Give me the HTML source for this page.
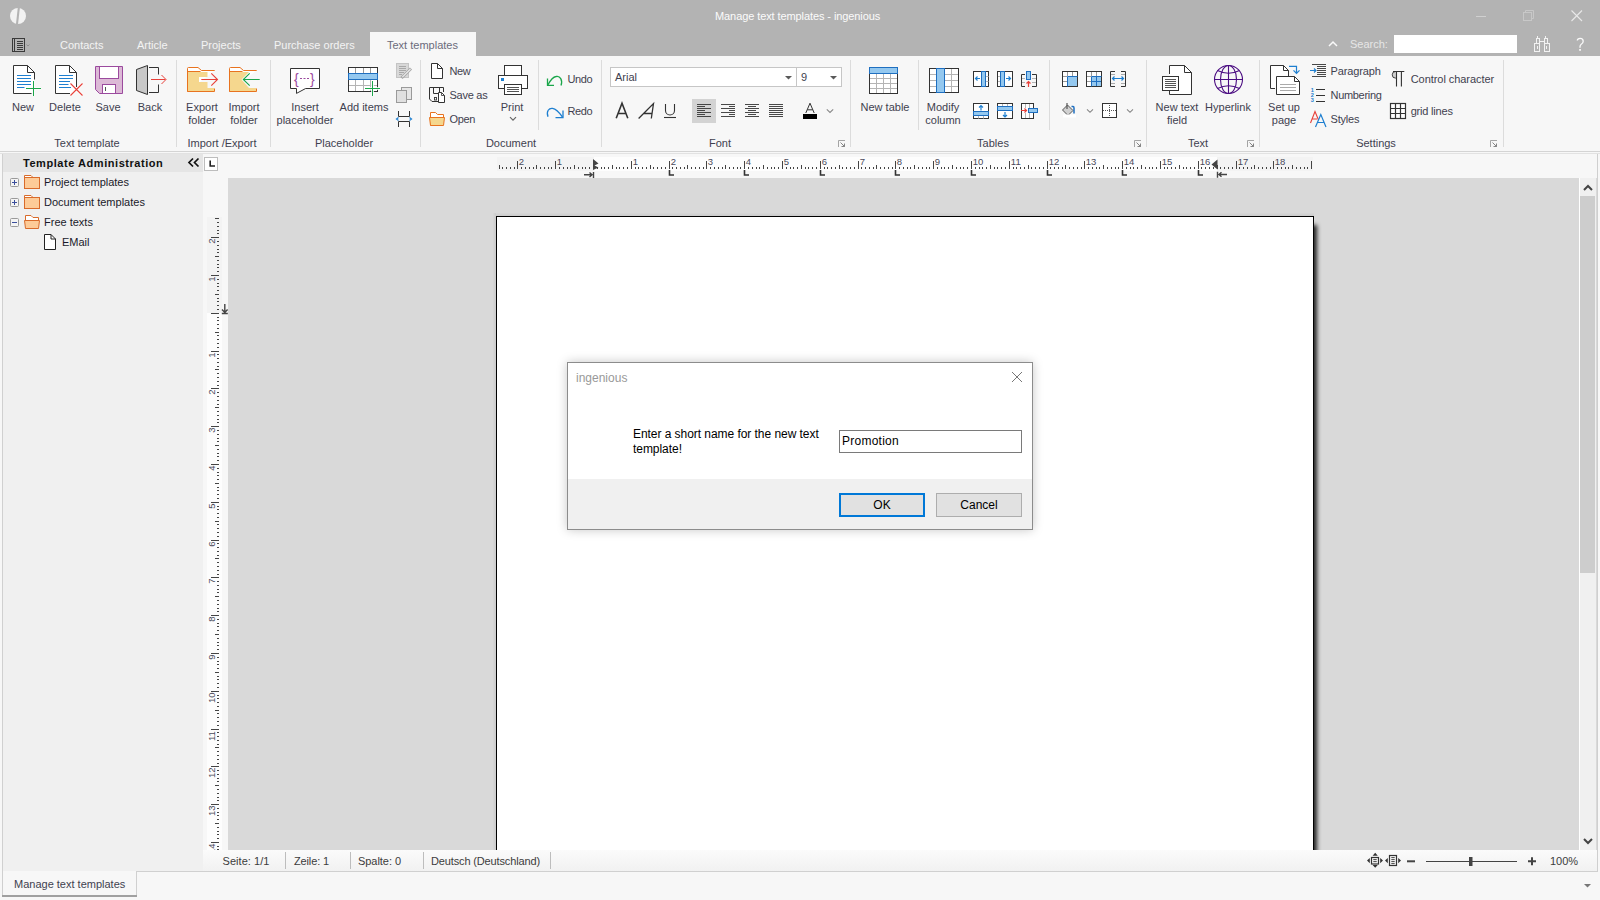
<!DOCTYPE html><html><head><meta charset="utf-8"><style>
html,body{margin:0;padding:0;}
body{width:1600px;height:900px;position:relative;overflow:hidden;background:#f7f7f7;font-family:"Liberation Sans",sans-serif;}
.t{position:absolute;white-space:nowrap;}
.r{position:absolute;}
.s{position:absolute;overflow:visible;}
</style></head><body>
<div class="r" style="left:0px;top:0px;width:1600px;height:56px;background:#b3b3b3;"></div>
<div class="t" style="left:715px;top:10.69px;font-size:11px;line-height:11px;color:#fbfbfb;letter-spacing:-0.09px;">Manage text templates - ingenious</div>
<svg class="s" style="left:10px;top:8px;" width="16" height="16" viewBox="0 0 16 16"><circle cx="8" cy="8" r="8" fill="#f2f2f2"/><path d="M8.9 -1 L6.9 17" stroke="#b3b3b3" stroke-width="2.1"/></svg>
<div class="r" style="left:1476px;top:16px;width:10px;height:1px;background:#d0d0d0;"></div>
<svg class="s" style="left:1523px;top:10px;" width="12" height="12" viewBox="0 0 12 12"><rect x="0.5" y="2.5" width="8" height="8" fill="none" stroke="#c8c8c8"/><path d="M2.5 2.5 V0.5 H10.5 V8.5 H8.5" fill="none" stroke="#c8c8c8"/></svg>
<svg class="s" style="left:1571px;top:10px;" width="12" height="12" viewBox="0 0 12 12"><path d="M0.5 0.5 L11 11 M11 0.5 L0.5 11" stroke="#e8e8e8" stroke-width="1.1"/></svg>
<div class="t" style="left:60px;top:39.69px;font-size:11px;line-height:11px;color:#f4f4f4;">Contacts</div>
<div class="t" style="left:137px;top:39.69px;font-size:11px;line-height:11px;color:#f4f4f4;">Article</div>
<div class="t" style="left:201px;top:39.69px;font-size:11px;line-height:11px;color:#f4f4f4;">Projects</div>
<div class="t" style="left:274px;top:39.69px;font-size:11px;line-height:11px;color:#f4f4f4;">Purchase orders</div>
<div class="r" style="left:370px;top:32px;width:106px;height:24px;background:#f7f7f7;"></div>
<div class="t" style="left:387px;top:39.69px;font-size:11px;line-height:11px;color:#6b6b7b;">Text templates</div>
<svg class="s" style="left:12px;top:38px;" width="20" height="14" viewBox="0 0 20 14"><rect x="0.5" y="0.5" width="12" height="13" fill="none" stroke="#3a3a3a"/><path d="M2.5 1 V13" stroke="#3a3a3a"/><path d="M5 3.5 H11 M5 5.5 H11 M5 7.5 H11 M5 9.5 H11 M5 11.5 H11" stroke="#3a3a3a"/><path d="M14.5 6.5 L16 8 L17.5 6.5" fill="none" stroke="#888" stroke-width="0.8"/></svg>
<svg class="s" style="left:1328px;top:41px;" width="10" height="6" viewBox="0 0 10 6"><path d="M1 5 L5 1 L9 5" fill="none" stroke="#fafafa" stroke-width="1.5"/></svg>
<div class="t" style="left:1350px;top:38.69px;font-size:11px;line-height:11px;color:#e6e6e6;">Search:</div>
<div class="r" style="left:1394px;top:35px;width:123px;height:18px;background:#ffffff;"></div>
<svg class="s" style="left:1530px;top:32px;" width="24" height="24" viewBox="0 0 24 24"><g fill="none" stroke="#f2f2f2" stroke-width="1"><rect x="4.5" y="11.5" width="5" height="8"/><rect x="14.5" y="11.5" width="5" height="8"/><rect x="6.5" y="6.5" width="3" height="5"/><rect x="14.5" y="6.5" width="3" height="5"/><path d="M9.5 9.5 H14.5"/><path d="M7.5 14 V17 M16.5 14 V17"/><path d="M7.5 4 V6.5 M15.5 4 V6.5"/></g></svg>
<svg class="s" style="left:1574px;top:36px;" width="12" height="16" viewBox="0 0 12 16"><path d="M3.3 4.5 Q3.5 2.3 6.2 2.3 Q9.2 2.3 9.2 5.2 Q9.2 7.2 7 8.5 Q6 9.2 6 11 V11.8" fill="none" stroke="#fafafa" stroke-width="1.3"/><rect x="5.2" y="13" width="1.7" height="1.8" fill="#fafafa"/></svg>
<div class="r" style="left:0px;top:151px;width:1600px;height:1px;background:#d4d4d4;"></div>
<div class="r" style="left:0px;top:153px;width:1600px;height:1px;background:#e2e2e2;"></div>
<div class="r" style="left:176px;top:60px;width:1px;height:87px;background:#dcdcdc;"></div>
<div class="r" style="left:270px;top:60px;width:1px;height:87px;background:#dcdcdc;"></div>
<div class="r" style="left:420px;top:60px;width:1px;height:87px;background:#dcdcdc;"></div>
<div class="r" style="left:601px;top:60px;width:1px;height:87px;background:#dcdcdc;"></div>
<div class="r" style="left:850px;top:60px;width:1px;height:87px;background:#dcdcdc;"></div>
<div class="r" style="left:1146px;top:60px;width:1px;height:87px;background:#dcdcdc;"></div>
<div class="r" style="left:1259px;top:60px;width:1px;height:87px;background:#dcdcdc;"></div>
<div class="r" style="left:1503px;top:60px;width:1px;height:87px;background:#dcdcdc;"></div>
<div class="r" style="left:538px;top:60px;width:1px;height:70px;background:#dcdcdc;"></div>
<div class="r" style="left:918px;top:60px;width:1px;height:70px;background:#dcdcdc;"></div>
<div class="r" style="left:1049px;top:60px;width:1px;height:70px;background:#dcdcdc;"></div>
<div class="t" style="left:23px;top:101.69px;font-size:11px;line-height:11px;color:#3f3f4f;transform:translateX(-50%);">New</div>
<div class="t" style="left:65px;top:101.69px;font-size:11px;line-height:11px;color:#3f3f4f;transform:translateX(-50%);">Delete</div>
<div class="t" style="left:108px;top:101.69px;font-size:11px;line-height:11px;color:#3f3f4f;transform:translateX(-50%);">Save</div>
<div class="t" style="left:150px;top:101.69px;font-size:11px;line-height:11px;color:#3f3f4f;transform:translateX(-50%);">Back</div>
<div class="t" style="left:202px;top:101.69px;font-size:11px;line-height:11px;color:#3f3f4f;transform:translateX(-50%);">Export</div>
<div class="t" style="left:202px;top:114.69px;font-size:11px;line-height:11px;color:#3f3f4f;transform:translateX(-50%);">folder</div>
<div class="t" style="left:244px;top:101.69px;font-size:11px;line-height:11px;color:#3f3f4f;transform:translateX(-50%);">Import</div>
<div class="t" style="left:244px;top:114.69px;font-size:11px;line-height:11px;color:#3f3f4f;transform:translateX(-50%);">folder</div>
<div class="t" style="left:305px;top:101.69px;font-size:11px;line-height:11px;color:#3f3f4f;transform:translateX(-50%);">Insert</div>
<div class="t" style="left:305px;top:114.69px;font-size:11px;line-height:11px;color:#3f3f4f;transform:translateX(-50%);">placeholder</div>
<div class="t" style="left:364px;top:101.69px;font-size:11px;line-height:11px;color:#3f3f4f;transform:translateX(-50%);">Add items</div>
<div class="t" style="left:512px;top:101.69px;font-size:11px;line-height:11px;color:#3f3f4f;transform:translateX(-50%);">Print</div>
<div class="t" style="left:885px;top:101.69px;font-size:11px;line-height:11px;color:#3f3f4f;transform:translateX(-50%);">New table</div>
<div class="t" style="left:943px;top:101.69px;font-size:11px;line-height:11px;color:#3f3f4f;transform:translateX(-50%);">Modify</div>
<div class="t" style="left:943px;top:114.69px;font-size:11px;line-height:11px;color:#3f3f4f;transform:translateX(-50%);">column</div>
<div class="t" style="left:1177px;top:101.69px;font-size:11px;line-height:11px;color:#3f3f4f;transform:translateX(-50%);">New text</div>
<div class="t" style="left:1177px;top:114.69px;font-size:11px;line-height:11px;color:#3f3f4f;transform:translateX(-50%);">field</div>
<div class="t" style="left:1228px;top:101.69px;font-size:11px;line-height:11px;color:#3f3f4f;transform:translateX(-50%);">Hyperlink</div>
<div class="t" style="left:1284px;top:101.69px;font-size:11px;line-height:11px;color:#3f3f4f;transform:translateX(-50%);">Set up</div>
<div class="t" style="left:1284px;top:114.69px;font-size:11px;line-height:11px;color:#3f3f4f;transform:translateX(-50%);">page</div>
<div class="t" style="left:87px;top:137.69px;font-size:11px;line-height:11px;color:#3f3f4f;transform:translateX(-50%);">Text template</div>
<div class="t" style="left:222px;top:137.69px;font-size:11px;line-height:11px;color:#3f3f4f;transform:translateX(-50%);">Import /Export</div>
<div class="t" style="left:344px;top:137.69px;font-size:11px;line-height:11px;color:#3f3f4f;transform:translateX(-50%);">Placeholder</div>
<div class="t" style="left:511px;top:137.69px;font-size:11px;line-height:11px;color:#3f3f4f;transform:translateX(-50%);">Document</div>
<div class="t" style="left:720px;top:137.69px;font-size:11px;line-height:11px;color:#3f3f4f;transform:translateX(-50%);">Font</div>
<div class="t" style="left:993px;top:137.69px;font-size:11px;line-height:11px;color:#3f3f4f;transform:translateX(-50%);">Tables</div>
<div class="t" style="left:1198px;top:137.69px;font-size:11px;line-height:11px;color:#3f3f4f;transform:translateX(-50%);">Text</div>
<div class="t" style="left:1376px;top:137.69px;font-size:11px;line-height:11px;color:#3f3f4f;transform:translateX(-50%);">Settings</div>
<div class="t" style="left:449.5px;top:65.69px;font-size:11px;line-height:11px;color:#3f3f4f;letter-spacing:-0.467px;">New</div>
<div class="t" style="left:449.5px;top:89.69px;font-size:11px;line-height:11px;color:#3f3f4f;letter-spacing:-0.254px;">Save as</div>
<div class="t" style="left:449.5px;top:113.69px;font-size:11px;line-height:11px;color:#3f3f4f;letter-spacing:-0.334px;">Open</div>
<div class="t" style="left:567.5px;top:73.69px;font-size:11px;line-height:11px;color:#3f3f4f;letter-spacing:-0.378px;">Undo</div>
<div class="t" style="left:567.5px;top:105.69px;font-size:11px;line-height:11px;color:#3f3f4f;letter-spacing:-0.378px;">Redo</div>
<div class="t" style="left:1330.5px;top:65.69px;font-size:11px;line-height:11px;color:#3f3f4f;letter-spacing:-0.134px;">Paragraph</div>
<div class="t" style="left:1330.5px;top:89.69px;font-size:11px;line-height:11px;color:#3f3f4f;letter-spacing:-0.312px;">Numbering</div>
<div class="t" style="left:1330.5px;top:113.69px;font-size:11px;line-height:11px;color:#3f3f4f;letter-spacing:-0.195px;">Styles</div>
<div class="t" style="left:1410.7px;top:73.69px;font-size:11px;line-height:11px;color:#3f3f4f;letter-spacing:-0.053px;">Control character</div>
<div class="t" style="left:1410.7px;top:105.69px;font-size:11px;line-height:11px;color:#3f3f4f;letter-spacing:-0.203px;">grid lines</div>
<div class="r" style="left:610px;top:67px;width:187px;height:20px;background:#ffffff;box-sizing:border-box;border:1px solid #c6c6c6;"></div>
<div class="r" style="left:796px;top:67px;width:46px;height:20px;background:#ffffff;box-sizing:border-box;border:1px solid #c6c6c6;"></div>
<div class="t" style="left:615px;top:71.69px;font-size:11px;line-height:11px;color:#3f3f4f;">Arial</div>
<div class="t" style="left:801px;top:71.69px;font-size:11px;line-height:11px;color:#3f3f4f;">9</div>
<svg class="s" style="left:785px;top:76px;" width="8" height="4" viewBox="0 0 8 4"><path d="M0 0 H7 L3.5 3.5Z" fill="#5a5a5a"/></svg>
<svg class="s" style="left:830px;top:76px;" width="8" height="4" viewBox="0 0 8 4"><path d="M0 0 H7 L3.5 3.5Z" fill="#5a5a5a"/></svg>
<div class="r" style="left:692px;top:99px;width:24px;height:24px;background:#d3d3d3;"></div>
<svg class="s" style="left:0;top:0" width="1600" height="152" viewBox="0 0 1600 152"><path d="M31.5 93.5 H13.5 V65.5 H27.5 L34.5 72.5 V79.5" fill="#fff" stroke="#333333"/><path d="M27.5 65.5 V72.5 H34.5" fill="none" stroke="#333333"/><path d="M17 75.5 H31 M17 78.5 H31 M17 81.5 H31 M17 84.5 H31 M17 87.5 H24.5" stroke="#1e7fd0"/><path d="M33.5 81 V96 M26 88.5 H41" stroke="#fff" stroke-width="3" opacity="0.7"/><path d="M33.5 81 V96 M26 88.5 H41" stroke="#1aa64a"/><path d="M70 93.5 H55.5 V65.5 H69.5 L76.5 72.5 V87" fill="#fff" stroke="#333333"/><path d="M69.5 65.5 V72.5 H76.5" fill="none" stroke="#333333"/><path d="M59 75.5 H73 M59 78.5 H73 M59 81.5 H70 M59 84.5 H68.5 M59 87.5 H71" stroke="#1e7fd0"/><path d="M70.5 83.5 L82.5 95.5 M82.5 83.5 L70.5 95.5" stroke="#fff" stroke-width="3" opacity="0.7"/><path d="M70.5 83.5 L82.5 95.5 M82.5 83.5 L70.5 95.5" stroke="#e8413a" stroke-width="1.1"/><path d="M95.5 66.5 H122.5 V93.5 H99.5 L95.5 89.5 Z" fill="#dcb9d6" stroke="#9b4a9e"/><rect x="99.5" y="66.5" width="19" height="12" fill="#fff" stroke="#9b4a9e"/><rect x="102.5" y="84.5" width="13" height="9" fill="#fff" stroke="#9b4a9e"/><path d="M105.5 87 V91" stroke="#555"/><path d="M136.5 69.5 L147.5 65.5 V94.5 L136.5 90.5 Z" fill="#c8c8c8" stroke="#333333" stroke-linejoin="round"/><path d="M149 67.5 H158.5 V74.5 M158.5 84.5 V92.5 H149" fill="none" stroke="#333333"/><path d="M151 79.5 H165.5 M161.5 75 L166 79.5 L161.5 84" fill="none" stroke="#e8413a"/><path d="M187.5 91.5 V68.5 Q187.5 67.5 188.5 67.5 H198.0 L201.5 70.5 H214.7" fill="#fff" stroke="#e8731f"/><path d="M187.5 71.5 H200.5" stroke="#e8731f"/><path d="M188 72 H207.5 V88 H214 V91 H188 Z M199 77 H207.5 V82 H199 Z" fill="#f5d78e" fill-rule="evenodd"/><path d="M187.5 71.5 V91.5 H214.5 V88.5" fill="none" stroke="#e8731f"/><path d="M201.3 79.5 H217.5 M211.3 73.3 L217.5 79.5 L211.3 85.7" fill="none" stroke="#e8413a" stroke-width="1.1"/><path d="M229.5 91.5 V68.5 Q229.5 67.5 230.5 67.5 H240.0 L243.5 70.5 H256.7" fill="#fff" stroke="#e8731f"/><path d="M229.5 71.5 H242.5" stroke="#e8731f"/><path d="M230 72 H249 L241.5 79.5 L249 88 H256 V91 H230 Z" fill="#f5d78e"/><path d="M229.5 71.5 V91.5 H256.5 V88.5" fill="none" stroke="#e8731f"/><path d="M243.3 79.5 H259.7 M249.7 73.3 L243.3 79.5 L249.7 85.7" fill="none" stroke="#1aa64a" stroke-width="1.1"/><path d="M290.5 68.5 H319.5 V88.5 H305.6 L296.5 93.4 V88.5 H290.5 Z" fill="#fff" stroke="#333333"/><text x="294" y="84" font-family="Liberation Sans" font-size="14" fill="#9b4a9e">{</text><text x="310" y="84" font-family="Liberation Sans" font-size="14" fill="#9b4a9e">}</text><path d="M300 78.5 H310" stroke="#9b4a9e" stroke-dasharray="2 1.5"/><rect x="348.5" y="67.5" width="29" height="24" fill="#fff" stroke="#333333"/><path d="M355.5 68 V73 M363.5 68 V73 M370.5 68 V73" stroke="#999"/><path d="M355.5 80 V91 M363.5 80 V91 M370.5 80 V91 M349 85.5 H377" stroke="#b4b4b4"/><rect x="348.5" y="73.5" width="29" height="6" fill="#94c8ef" stroke="#1f6fc0"/><path d="M372.5 81 V96 M365 88.5 H380" stroke="#fff" stroke-width="3" opacity="0.8"/><path d="M372.5 81 V96 M365 88.5 H380" stroke="#1aa64a"/><rect x="396.5" y="63.5" width="12" height="14" fill="#d8d8d8" stroke="#c4c4c4"/><path d="M399 66.5 H406 M399 68.5 H406 M399 70.5 H406 M399 72.5 H404 M399 74.5 H402" stroke="#a8a8a8"/><path d="M401.5 78 L411 68.5" stroke="#a6a6a6" stroke-width="3"/><path d="M402.3 77.2 L410.5 69" stroke="#eeeeee" stroke-width="1.1"/><rect x="401.5" y="87.5" width="10" height="12" fill="#e6e6e6" stroke="#9a9a9a"/><rect x="396.5" y="90.5" width="10" height="12" fill="#e0e0e0" stroke="#9a9a9a"/><path d="M398.5 111 V116.5 H409.5 V111 M398.5 127 V121.5 H409.5 V127" fill="none" stroke="#333333"/><path d="M398.5 117.5 L396.5 119 L398.5 120.5 M409.5 117.5 L411.5 119 L409.5 120.5" fill="none" stroke="#1e7fd0" stroke-width="1.2"/><path d="M431.5 78.5 V63.5 H437.5 L442.5 68.5 V78.5 Z" fill="#fff" stroke="#333333"/><path d="M437.5 63.5 V68.5 H442.5" fill="none" stroke="#333333"/><path d="M438 101.5 H432 L429.5 99 V87.5 H443.5 V92" fill="none" stroke="#333333"/><path d="M433.5 88 V93.5 H438 M439.5 88 V92" fill="none" stroke="#333333"/><rect x="434.5" y="97.5" width="2" height="2.5" fill="none" stroke="#333333" stroke-width="0.9"/><path d="M438.5 102.5 V92.5 H441.5 L444.5 95.5 V102.5 Z" fill="#fff" stroke="#333333"/><path d="M441.5 92.5 V95.5 H444.5" fill="none" stroke="#333333" stroke-width="0.8"/><path d="M430.5 125.5 V112.5 H435.5 L437.5 114.5 H443.5 V117" fill="#fff" stroke="#e8731f"/><path d="M429.5 117.5 H444.5 L443.5 125.5 H430.5 Z" fill="#f5d78e" stroke="#e8731f"/><rect x="504.5" y="65.5" width="17" height="10" fill="#fff" stroke="#333333"/><rect x="498.5" y="75.5" width="29" height="13" fill="#fff" stroke="#333333"/><rect x="504.5" y="84.5" width="17" height="10" fill="#fff" stroke="#333333"/><path d="M507 87.5 H519 M507 89.5 H519 M507 91.5 H519" stroke="#555"/><rect x="501" y="78" width="3" height="3" fill="#1e7fd0"/><path d="M510 117.2 L513 120.2 L516 117.2" fill="none" stroke="#666" stroke-width="1.2"/><path d="M561 85.5 C563 80 560 75.5 556 76.5 C553 77 550 81 547.8 85" fill="none" stroke="#1aa64a" stroke-width="1.3"/><path d="M547.5 78.5 V85.3 H554" fill="none" stroke="#1aa64a" stroke-width="1.3"/><path d="M548 116.7 C546 111 549 108 552.5 108.4 C556 109 560 113.5 562.5 117" fill="none" stroke="#1e7fd0" stroke-width="1.3"/><path d="M563 110.5 V117.7 H555.5" fill="none" stroke="#1e7fd0" stroke-width="1.3"/><path d="M616.2 118.3 L622 103.3 L627.8 118.3 M618.3 113.5 H625.7" fill="none" stroke="#333333" stroke-width="1.6"/><path d="M638.6 118.5 L653.5 103.5 L651.3 118.5 M644 113.5 H651.7" fill="none" stroke="#333333" stroke-width="1.3"/><path d="M665.5 104 V110.5 A4.5 4.5 0 0 0 674.5 110.5 V104" fill="none" stroke="#333333" stroke-width="1.1"/><path d="M664 117.5 H676" stroke="#333333" stroke-width="1.1"/><path d="M697 104.5 H711" stroke="#333333" stroke-width="0.9"/><path d="M697 106.5 H705" stroke="#333333" stroke-width="0.9"/><path d="M697 108.5 H711" stroke="#333333" stroke-width="0.9"/><path d="M697 110.5 H705" stroke="#333333" stroke-width="0.9"/><path d="M697 112.5 H711" stroke="#333333" stroke-width="0.9"/><path d="M697 114.5 H705" stroke="#333333" stroke-width="0.9"/><path d="M697 116.5 H711" stroke="#333333" stroke-width="0.9"/><path d="M721 104.5 H735" stroke="#333333" stroke-width="0.9"/><path d="M729 106.5 H735" stroke="#333333" stroke-width="0.9"/><path d="M721 108.5 H735" stroke="#333333" stroke-width="0.9"/><path d="M729 110.5 H735" stroke="#333333" stroke-width="0.9"/><path d="M721 112.5 H735" stroke="#333333" stroke-width="0.9"/><path d="M729 114.5 H735" stroke="#333333" stroke-width="0.9"/><path d="M721 116.5 H735" stroke="#333333" stroke-width="0.9"/><path d="M745 104.5 H759" stroke="#333333" stroke-width="0.9"/><path d="M748 106.5 H756" stroke="#333333" stroke-width="0.9"/><path d="M745 108.5 H759" stroke="#333333" stroke-width="0.9"/><path d="M748 110.5 H756" stroke="#333333" stroke-width="0.9"/><path d="M745 112.5 H759" stroke="#333333" stroke-width="0.9"/><path d="M748 114.5 H756" stroke="#333333" stroke-width="0.9"/><path d="M745 116.5 H759" stroke="#333333" stroke-width="0.9"/><path d="M769 104.5 H783" stroke="#333333" stroke-width="0.9"/><path d="M769 106.5 H783" stroke="#333333" stroke-width="0.9"/><path d="M769 108.5 H783" stroke="#333333" stroke-width="0.9"/><path d="M769 110.5 H783" stroke="#333333" stroke-width="0.9"/><path d="M769 112.5 H783" stroke="#333333" stroke-width="0.9"/><path d="M769 114.5 H783" stroke="#333333" stroke-width="0.9"/><path d="M769 116.5 H783" stroke="#333333" stroke-width="0.9"/><path d="M805.8 113 L810 103.2 L814.2 113 M807.3 109.8 H812.7" fill="none" stroke="#333333" stroke-width="1"/><rect x="803" y="114" width="14" height="5" fill="#000"/><path d="M826.8 109.3 L830 112.5 L833.2 109.3" fill="none" stroke="#888" stroke-width="1.1"/><rect x="869.5" y="67.5" width="28" height="26" fill="#fff" stroke="#333333"/><path d="M876.5 74 V93 M883.5 74 V93 M890.5 74 V93 M870 78.5 H897 M870 83.5 H897 M870 88.5 H897" stroke="#b4b4b4"/><rect x="869.5" y="67.5" width="28" height="26" fill="none" stroke="#333333"/><rect x="869.5" y="67.5" width="28" height="6" fill="#94c8ef" stroke="#1f6fc0"/><rect x="929.5" y="68.5" width="29" height="24" fill="#fff" stroke="#333333"/><path d="M951.5 69 V92 M930 74.5 H958 M930 80.5 H958 M930 86.5 H958" stroke="#b4b4b4"/><rect x="929.5" y="68.5" width="29" height="24" fill="none" stroke="#333333"/><rect x="936.5" y="68.5" width="8" height="24" fill="#94c8ef" stroke="#1f6fc0"/><rect x="973.5" y="71.5" width="15" height="15" fill="#fff" stroke="#333333"/><path d="M986 76.5 H988.5 M986 81.5 H988.5" stroke="#b4b4b4"/><rect x="981.5" y="71.5" width="4" height="15" fill="#94c8ef" stroke="#1f6fc0"/><path d="M980 78.5 H975.5 M977.5 76.5 L975.5 78.5 L977.5 80.5" fill="none" stroke="#1e7fd0" stroke-width="1.2"/><rect x="997.5" y="71.5" width="15" height="15" fill="#fff" stroke="#333333"/><path d="M998 76.5 H1000 M998 81.5 H1000" stroke="#b4b4b4"/><rect x="1000.5" y="71.5" width="4" height="15" fill="#94c8ef" stroke="#1f6fc0"/><path d="M1006 78.5 H1010.5 M1008.5 76.5 L1010.5 78.5 L1008.5 80.5" fill="none" stroke="#1e7fd0" stroke-width="1.2"/><path d="M1025 74.5 H1021.5 V86.5 H1025 M1032 74.5 H1036.5 V86.5 H1032" fill="none" stroke="#333333"/><path d="M1022 78.5 H1025 M1022 82.5 H1025 M1032 78.5 H1036 M1032 82.5 H1036" stroke="#b4b4b4"/><rect x="1026.5" y="71.5" width="4" height="8" fill="#94c8ef" stroke="#1f6fc0"/><path d="M1028.5 87 V81.5 M1026.5 83.5 L1028.5 81.5 L1030.5 83.5" fill="none" stroke="#e8413a" stroke-width="1.2"/><rect x="973.5" y="103.5" width="15" height="15" fill="#fff" stroke="#333333"/><path d="M978.5 116 V118.5 M983.5 116 V118.5" stroke="#b4b4b4"/><rect x="973.5" y="111.5" width="15" height="4" fill="#94c8ef" stroke="#1f6fc0"/><path d="M981 110.5 V105.5 M979 107.5 L981 105.5 L983 107.5" fill="none" stroke="#1e7fd0" stroke-width="1.2"/><rect x="997.5" y="103.5" width="15" height="15" fill="#fff" stroke="#333333"/><path d="M1002.5 104 V106 M1007.5 104 V106" stroke="#b4b4b4"/><rect x="997.5" y="106.5" width="15" height="4" fill="#94c8ef" stroke="#1f6fc0"/><path d="M1005 112 V117 M1003 115 L1005 117 L1007 115" fill="none" stroke="#1e7fd0" stroke-width="1.2"/><rect x="1021.5" y="103.5" width="12" height="15" fill="#fff" stroke="#333333"/><path d="M1025.5 104 V108 M1029.5 104 V108 M1025.5 113 V118 M1029.5 113 V118" stroke="#b4b4b4"/><rect x="1028.5" y="108.5" width="9" height="4" fill="#94c8ef" stroke="#1f6fc0"/><path d="M1021 110.5 H1026.5 M1024.5 108.5 L1026.5 110.5 L1024.5 112.5" fill="none" stroke="#e8413a" stroke-width="1.2"/><rect x="1062.5" y="71.5" width="15" height="15" fill="#fff" stroke="#333333"/><path d="M1067.5 72 V76 M1072.5 72 V76 M1063 76.5 H1067 M1063 81.5 H1067" stroke="#999"/><path d="M1067.5 86.5 V76.5 H1077.5" fill="none" stroke="#1f6fc0"/><rect x="1068" y="77" width="9" height="9" fill="#94c8ef"/><rect x="1086.5" y="71.5" width="15" height="15" fill="#fff" stroke="#333333"/><path d="M1091.5 72 V76 M1096.5 72 V76 M1087 76.5 H1091 M1087 81.5 H1091" stroke="#999"/><rect x="1092" y="77" width="9" height="9" fill="#94c8ef"/><path d="M1091.5 86.5 V76.5 H1101.5 M1096.5 77 V86 M1092 81.5 H1101" fill="none" stroke="#1f6fc0"/><path d="M1115 71.5 H1110.5 V86.5 H1115 M1121 71.5 H1125.5 V86.5 H1121" fill="none" stroke="#333333"/><path d="M1111 74.5 H1115 M1111 83.5 H1115 M1121 74.5 H1125 M1121 83.5 H1125" stroke="#aaa"/><path d="M1112.5 78.5 H1123.5 M1114.5 76.5 L1112.5 78.5 L1114.5 80.5 M1121.5 76.5 L1123.5 78.5 L1121.5 80.5" fill="none" stroke="#1e7fd0" stroke-width="1.2"/><path d="M1062.5 110 L1067.5 105 L1073 110.5 L1068 115.5 Z" fill="#d0d0d0" stroke="#555"/><path d="M1067 103 V109" stroke="#555" stroke-width="1.2"/><path d="M1071.5 106.5 H1073 Q1074 106.5 1074 108 V113.5" fill="none" stroke="#1f6fc0" stroke-width="1.5"/><rect x="1063" y="114.5" width="13" height="3" fill="#fff"/><path d="M1087 109.3 L1090 112.3 L1093 109.3 M1127 109.3 L1130 112.3 L1133 109.3" fill="none" stroke="#888" stroke-width="1.1"/><rect x="1102.5" y="103.5" width="14" height="14" fill="#fff" stroke="#333333"/><path d="M1109.5 105 V117 M1103 110.5 H1116" stroke="#555" stroke-dasharray="1 1"/><path d="M1169.5 74 V65.5 H1184.5 L1191.5 72.5 V94.5 H1169.5 V91" fill="#fff" stroke="#333333"/><path d="M1184.5 65.5 V72.5 H1191.5" fill="none" stroke="#333333"/><rect x="1162.5" y="76.5" width="16" height="14" fill="#fff" stroke="#333333"/><path d="M1165 79.5 H1176 M1165 81.5 H1176 M1165 83.5 H1176 M1165 85.5 H1176 M1165 87.5 H1176" stroke="#555"/><circle cx="1228.5" cy="79.5" r="14" fill="none" stroke="#4b0d82" stroke-width="1.1"/><ellipse cx="1228.5" cy="79.5" rx="8" ry="14" fill="none" stroke="#4b0d82" stroke-width="1.1"/><path d="M1228.5 65.5 V93.5 M1214.5 79.5 H1242.5" stroke="#4b0d82" stroke-width="1.1"/><path d="M1217.5 70.5 Q1228.5 76 1239.5 70.5 M1217.5 88.5 Q1228.5 83 1239.5 88.5" fill="none" stroke="#4b0d82" stroke-width="1.1"/><path d="M1275 88.5 H1270.5 V65.5 H1283.5 L1288.5 70.5 V76" fill="#fff" stroke="#333333"/><path d="M1283.5 65.5 V70.5 H1288.5" fill="none" stroke="#333333"/><path d="M1276.5 76.5 H1294.5 L1299.5 81.5 V94.5 H1276.5 Z" fill="#fff" stroke="#333333"/><path d="M1294.5 76.5 V81.5 H1299.5" fill="none" stroke="#333333"/><path d="M1280 84.5 H1296 M1280 87.5 H1296 M1280 90.5 H1296" stroke="#aaa"/><path d="M1289 66.3 H1296.5 V73.3 M1293.5 70.3 L1296.5 73.3 L1299.5 70.3" fill="none" stroke="#1e7fd0" stroke-width="1.2"/><path d="M1312 64.5 H1326 M1312 76.5 H1326 M1317 66.5 H1326 M1317 68.5 H1326 M1317 70.5 H1326 M1317 72.5 H1326 M1317 74.5 H1326" stroke="#333333" stroke-width="0.9"/><path d="M1310 70.5 H1316 M1314 68.5 L1316 70.5 L1314 72.5" fill="none" stroke="#1e7fd0" stroke-width="1.1"/><path d="M1316 89.5 H1325 M1316 95.5 H1325 M1316 101.5 H1325" stroke="#333333" stroke-width="1.1"/><text x="1310.8" y="92" font-family="Liberation Sans" font-weight="bold" font-size="5.6" fill="#1e7fd0">1</text><text x="1310.8" y="97" font-family="Liberation Sans" font-weight="bold" font-size="5.6" fill="#1e7fd0">2</text><text x="1310.8" y="102.2" font-family="Liberation Sans" font-weight="bold" font-size="5.6" fill="#1e7fd0">3</text><path d="M1310.5 123 L1315 111.5 L1318.5 120 M1312 119 H1317" fill="none" stroke="#e8413a" stroke-width="1.1"/><path d="M1315.5 127 L1320.8 114.5 L1326 127 M1317.5 122.5 H1324" fill="none" stroke="#1e7fd0" stroke-width="1.2"/><path d="M1396.5 71.5 H1395.5 A3.3 3.3 0 0 0 1395.5 78.1 H1396.5 Z" fill="#cfcfcf" stroke="#333333" stroke-width="0.9"/><path d="M1393 71.5 H1404.3 M1396.5 71.5 V86.6 M1401.4 71.5 V86.6" fill="none" stroke="#333333" stroke-width="1.1"/><rect x="1390.5" y="103.5" width="15" height="15" fill="#fff" stroke="#333333" stroke-width="1.2"/><path d="M1395.5 104 V118 M1400.5 104 V118 M1391 108.5 H1405 M1391 113.5 H1405" stroke="#333333" stroke-width="1.2"/><path d="M838.5 147 V140.5 H845" fill="none" stroke="#9a9a9a" stroke-width="0.9"/><path d="M840.5 142.5 L844.5 146.5 M844.5 143.5 V146.5 H841.5" fill="none" stroke="#777" stroke-width="0.9"/><path d="M1134.5 147 V140.5 H1141" fill="none" stroke="#9a9a9a" stroke-width="0.9"/><path d="M1136.5 142.5 L1140.5 146.5 M1140.5 143.5 V146.5 H1137.5" fill="none" stroke="#777" stroke-width="0.9"/><path d="M1247.5 147 V140.5 H1254" fill="none" stroke="#9a9a9a" stroke-width="0.9"/><path d="M1249.5 142.5 L1253.5 146.5 M1253.5 143.5 V146.5 H1250.5" fill="none" stroke="#777" stroke-width="0.9"/><path d="M1490.5 147 V140.5 H1497" fill="none" stroke="#9a9a9a" stroke-width="0.9"/><path d="M1492.5 142.5 L1496.5 146.5 M1496.5 143.5 V146.5 H1493.5" fill="none" stroke="#777" stroke-width="0.9"/></svg>
<div class="r" style="left:2px;top:154px;width:201px;height:717px;background:#f0f0f0;"></div>
<div class="r" style="left:2px;top:154px;width:1px;height:717px;background:#d0d0d0;"></div>
<div class="r" style="left:3px;top:154px;width:200px;height:18px;background:#e5e5e5;"></div>
<svg class="s" style="left:187px;top:157px;" width="14" height="12" viewBox="0 0 14 12"><path d="M6 1.5 L2 5.5 L6 9.5 M11.5 1.5 L7.5 5.5 L11.5 9.5" fill="none" stroke="#111" stroke-width="1.7"/></svg>
<div class="t" style="left:23px;top:157.69px;font-size:11px;line-height:11px;color:#111111;font-weight:bold;letter-spacing:0.55px;">Template Administration</div>
<div class="t" style="left:44px;top:176.69px;font-size:11px;line-height:11px;color:#1a1a2a;">Project templates</div>
<div class="t" style="left:44px;top:196.69px;font-size:11px;line-height:11px;color:#1a1a2a;">Document templates</div>
<div class="t" style="left:44px;top:216.69px;font-size:11px;line-height:11px;color:#1a1a2a;">Free texts</div>
<div class="t" style="left:62px;top:236.69px;font-size:11px;line-height:11px;color:#1a1a2a;">EMail</div>
<svg class="s" style="left:0;top:0" width="80" height="260" viewBox="0 0 80 260"><rect x="10.5" y="178.5" width="8" height="8" rx="1" fill="#f4f4f4" stroke="#9a9a9a"/><path d="M12 182.5 H17" stroke="#3b4e9c"/><path d="M14.5 180 V185" stroke="#3b4e9c"/><path d="M24.5 177.5 V175.5 H31 L33 177.5" fill="#fff" stroke="#d96b2b"/><rect x="24.5" y="177.5" width="15" height="11" fill="#fdcb98" stroke="#d96b2b"/><rect x="10.5" y="198.5" width="8" height="8" rx="1" fill="#f4f4f4" stroke="#9a9a9a"/><path d="M12 202.5 H17" stroke="#3b4e9c"/><path d="M14.5 200 V205" stroke="#3b4e9c"/><path d="M24.5 197.5 V195.5 H31 L33 197.5" fill="#fff" stroke="#d96b2b"/><rect x="24.5" y="197.5" width="15" height="11" fill="#fdcb98" stroke="#d96b2b"/><rect x="10.5" y="218.5" width="8" height="8" rx="1" fill="#f4f4f4" stroke="#9a9a9a"/><path d="M12 222.5 H17" stroke="#3b4e9c"/><path d="M25.5 220.5 V215.5 H31 L33 217.5 H38.5 V220.5" fill="#fff" stroke="#d96b2b"/><path d="M24.5 220.5 H39.5 L38.5 228.5 H25.5 Z" fill="#fdcb98" stroke="#d96b2b"/><path d="M44.5 249.5 V234.5 H51 L55.5 239 V249.5 Z" fill="#fff" stroke="#222"/><path d="M51 234.5 V239 H55.5" fill="none" stroke="#222"/></svg>
<div class="r" style="left:228px;top:178px;width:1369px;height:672px;background:#d9d9d9;"></div>
<div class="r" style="left:1307px;top:222px;width:7px;height:640px;box-shadow:3px 3px 4px rgba(0,0,0,0.85);background:#fff"></div>
<div class="r" style="left:493px;top:213px;width:821px;height:3px;background:linear-gradient(#d7d7d7,#cbcbcb);"></div>
<div class="r" style="left:493px;top:213px;width:3px;height:637px;background:linear-gradient(to right,#d7d7d7,#cbcbcb);"></div>
<div class="r" style="left:496px;top:216px;width:818px;height:634px;background:#ffffff;box-sizing:border-box;border-left:1px solid #000;border-top:1px solid #000;border-right:1px solid #000;"></div>
<div class="r" style="left:1579px;top:178px;width:1px;height:672px;background:#ffffff;"></div>
<div class="r" style="left:1580px;top:178px;width:16px;height:672px;background:#f0f0f0;"></div>
<div class="r" style="left:1580px;top:196px;width:15px;height:377px;background:#cdcdcd;"></div>
<svg class="s" style="left:1583px;top:185px;" width="10" height="6" viewBox="0 0 10 6"><path d="M1 5 L5 1 L9 5" fill="none" stroke="#444" stroke-width="2"/></svg>
<svg class="s" style="left:1583px;top:838px;" width="10" height="6" viewBox="0 0 10 6"><path d="M1 1 L5 5 L9 1" fill="none" stroke="#444" stroke-width="2"/></svg>
<div class="r" style="left:1597px;top:154px;width:1px;height:718px;background:#cfcfcf;"></div>
<div class="r" style="left:497px;top:157px;width:816px;height:14px;background:#f3f3f3"></div><div class="r" style="left:594px;top:157px;width:623px;height:14px;background:#fdfdfd"></div><svg class="s" style="left:0;top:0" width="1600" height="900" viewBox="0 0 1600 900"><path d="M499.5 165 V169 M502.5 167 V169 M506.5 167 V169 M510.5 167 V169 M514.5 167 V169 M517.5 161 V169 M521.5 167 V169 M525.5 167 V169 M529.5 167 V169 M533.5 167 V169 M536.5 165 V169 M540.5 167 V169 M544.5 167 V169 M548.5 167 V169 M551.5 167 V169 M555.5 161 V169 M559.5 167 V169 M563.5 167 V169 M567.5 167 V169 M570.5 167 V169 M574.5 165 V169 M578.5 167 V169 M582.5 167 V169 M585.5 167 V169 M589.5 167 V169 M593.5 161 V169 M597.5 167 V169 M601.5 167 V169 M604.5 167 V169 M608.5 167 V169 M612.5 165 V169 M616.5 167 V169 M619.5 167 V169 M623.5 167 V169 M627.5 167 V169 M631.5 161 V169 M635.5 167 V169 M638.5 167 V169 M642.5 167 V169 M646.5 167 V169 M650.5 165 V169 M653.5 167 V169 M657.5 167 V169 M661.5 167 V169 M665.5 167 V169 M669.5 161 V169 M672.5 167 V169 M676.5 167 V169 M680.5 167 V169 M684.5 167 V169 M687.5 165 V169 M691.5 167 V169 M695.5 167 V169 M699.5 167 V169 M703.5 167 V169 M706.5 161 V169 M710.5 167 V169 M714.5 167 V169 M718.5 167 V169 M722.5 167 V169 M725.5 165 V169 M729.5 167 V169 M733.5 167 V169 M737.5 167 V169 M740.5 167 V169 M744.5 161 V169 M748.5 167 V169 M752.5 167 V169 M756.5 167 V169 M759.5 167 V169 M763.5 165 V169 M767.5 167 V169 M771.5 167 V169 M774.5 167 V169 M778.5 167 V169 M782.5 161 V169 M786.5 167 V169 M790.5 167 V169 M793.5 167 V169 M797.5 167 V169 M801.5 165 V169 M805.5 167 V169 M808.5 167 V169 M812.5 167 V169 M816.5 167 V169 M820.5 161 V169 M824.5 167 V169 M827.5 167 V169 M831.5 167 V169 M835.5 167 V169 M839.5 165 V169 M842.5 167 V169 M846.5 167 V169 M850.5 167 V169 M854.5 167 V169 M858.5 161 V169 M861.5 167 V169 M865.5 167 V169 M869.5 167 V169 M873.5 167 V169 M876.5 165 V169 M880.5 167 V169 M884.5 167 V169 M888.5 167 V169 M892.5 167 V169 M895.5 161 V169 M899.5 167 V169 M903.5 167 V169 M907.5 167 V169 M910.5 167 V169 M914.5 165 V169 M918.5 167 V169 M922.5 167 V169 M926.5 167 V169 M929.5 167 V169 M933.5 161 V169 M937.5 167 V169 M941.5 167 V169 M944.5 167 V169 M948.5 167 V169 M952.5 165 V169 M956.5 167 V169 M960.5 167 V169 M963.5 167 V169 M967.5 167 V169 M971.5 161 V169 M975.5 167 V169 M979.5 167 V169 M982.5 167 V169 M986.5 167 V169 M990.5 165 V169 M994.5 167 V169 M997.5 167 V169 M1001.5 167 V169 M1005.5 167 V169 M1009.5 161 V169 M1013.5 167 V169 M1016.5 167 V169 M1020.5 167 V169 M1024.5 167 V169 M1028.5 165 V169 M1031.5 167 V169 M1035.5 167 V169 M1039.5 167 V169 M1043.5 167 V169 M1047.5 161 V169 M1050.5 167 V169 M1054.5 167 V169 M1058.5 167 V169 M1062.5 167 V169 M1065.5 165 V169 M1069.5 167 V169 M1073.5 167 V169 M1077.5 167 V169 M1081.5 167 V169 M1084.5 161 V169 M1088.5 167 V169 M1092.5 167 V169 M1096.5 167 V169 M1099.5 167 V169 M1103.5 165 V169 M1107.5 167 V169 M1111.5 167 V169 M1115.5 167 V169 M1118.5 167 V169 M1122.5 161 V169 M1126.5 167 V169 M1130.5 167 V169 M1133.5 167 V169 M1137.5 167 V169 M1141.5 165 V169 M1145.5 167 V169 M1149.5 167 V169 M1152.5 167 V169 M1156.5 167 V169 M1160.5 161 V169 M1164.5 167 V169 M1167.5 167 V169 M1171.5 167 V169 M1175.5 167 V169 M1179.5 165 V169 M1183.5 167 V169 M1186.5 167 V169 M1190.5 167 V169 M1194.5 167 V169 M1198.5 161 V169 M1201.5 167 V169 M1205.5 167 V169 M1209.5 167 V169 M1213.5 167 V169 M1217.5 165 V169 M1220.5 167 V169 M1224.5 167 V169 M1228.5 167 V169 M1232.5 167 V169 M1236.5 161 V169 M1239.5 167 V169 M1243.5 167 V169 M1247.5 167 V169 M1251.5 167 V169 M1254.5 165 V169 M1258.5 167 V169 M1262.5 167 V169 M1266.5 167 V169 M1270.5 167 V169 M1273.5 161 V169 M1277.5 167 V169 M1281.5 167 V169 M1285.5 167 V169 M1288.5 167 V169 M1292.5 165 V169 M1296.5 167 V169 M1300.5 167 V169 M1304.5 167 V169 M1307.5 167 V169 M1311.5 161 V169" stroke="#444" stroke-width="1"/><g font-family="Liberation Sans" fill="#4a4a5a"><text x="518.8" y="165" font-size="9.5">2</text><text x="556.8" y="165" font-size="9.5">1</text><text x="632.8" y="165" font-size="9.5">1</text><text x="670.8" y="165" font-size="9.5">2</text><text x="707.8" y="165" font-size="9.5">3</text><text x="745.8" y="165" font-size="9.5">4</text><text x="783.8" y="165" font-size="9.5">5</text><text x="821.8" y="165" font-size="9.5">6</text><text x="859.8" y="165" font-size="9.5">7</text><text x="896.8" y="165" font-size="9.5">8</text><text x="934.8" y="165" font-size="9.5">9</text><text x="972.8" y="165" font-size="9.5">10</text><text x="1010.8" y="165" font-size="9.5">11</text><text x="1048.8" y="165" font-size="9.5">12</text><text x="1085.8" y="165" font-size="9.5">13</text><text x="1123.8" y="165" font-size="9.5">14</text><text x="1161.8" y="165" font-size="9.5">15</text><text x="1199.8" y="165" font-size="9.5">16</text><text x="1237.8" y="165" font-size="9.5">17</text><text x="1274.8" y="165" font-size="9.5">18</text></g><path d="M593 159 L598.5 163.5 L594.5 165.5 L598.5 167.5 L593 170 Z" fill="#444"/><path d="M1217.5 159.5 L1211.5 164.5 L1217.5 169.5 Z" fill="#444"/><path d="M584 174.8 H592 M589.5 172.5 L592 174.8 L589.5 177 M593.5 172 V178" fill="none" stroke="#444" stroke-width="1.4"/><path d="M1227 174.5 H1219 M1221.5 172.3 L1219 174.5 L1221.5 176.7 M1217.5 171.8 V177.8" fill="none" stroke="#444" stroke-width="1.4"/><path d="M669.5 170 V175 H674.0" fill="none" stroke="#333" stroke-width="1.6"/><path d="M744.5 170 V175 H749.0" fill="none" stroke="#333" stroke-width="1.6"/><path d="M820.5 170 V175 H825.0" fill="none" stroke="#333" stroke-width="1.6"/><path d="M895.5 170 V175 H900.0" fill="none" stroke="#333" stroke-width="1.6"/><path d="M971.5 170 V175 H976.0" fill="none" stroke="#333" stroke-width="1.6"/><path d="M1047.5 170 V175 H1052.0" fill="none" stroke="#333" stroke-width="1.6"/><path d="M1122.5 170 V175 H1127.0" fill="none" stroke="#333" stroke-width="1.6"/><path d="M1198.5 170 V175 H1203.0" fill="none" stroke="#333" stroke-width="1.6"/></svg><div class="r" style="left:207px;top:217px;width:15px;height:633px;background:#fdfdfd"></div><div class="r" style="left:207px;top:217px;width:15px;height:96px;background:#f3f3f3"></div><svg class="s" style="left:0;top:0" width="1600" height="900" viewBox="0 0 1600 900"><path d="M215 218.5 H219 M217 222.5 H219 M217 226.5 H219 M217 230.5 H219 M217 233.5 H219 M211 237.5 H219 M217 241.5 H219 M217 245.5 H219 M217 249.5 H219 M217 252.5 H219 M215 256.5 H219 M217 260.5 H219 M217 264.5 H219 M217 267.5 H219 M217 271.5 H219 M211 275.5 H219 M217 279.5 H219 M217 283.5 H219 M217 286.5 H219 M217 290.5 H219 M215 294.5 H219 M217 298.5 H219 M217 301.5 H219 M217 305.5 H219 M217 309.5 H219 M211 313.5 H219 M217 317.5 H219 M217 320.5 H219 M217 324.5 H219 M217 328.5 H219 M215 332.5 H219 M217 335.5 H219 M217 339.5 H219 M217 343.5 H219 M217 347.5 H219 M211 351.5 H219 M217 354.5 H219 M217 358.5 H219 M217 362.5 H219 M217 366.5 H219 M215 369.5 H219 M217 373.5 H219 M217 377.5 H219 M217 381.5 H219 M217 385.5 H219 M211 388.5 H219 M217 392.5 H219 M217 396.5 H219 M217 400.5 H219 M217 404.5 H219 M215 407.5 H219 M217 411.5 H219 M217 415.5 H219 M217 419.5 H219 M217 422.5 H219 M211 426.5 H219 M217 430.5 H219 M217 434.5 H219 M217 438.5 H219 M217 441.5 H219 M215 445.5 H219 M217 449.5 H219 M217 453.5 H219 M217 456.5 H219 M217 460.5 H219 M211 464.5 H219 M217 468.5 H219 M217 472.5 H219 M217 475.5 H219 M217 479.5 H219 M215 483.5 H219 M217 487.5 H219 M217 490.5 H219 M217 494.5 H219 M217 498.5 H219 M211 502.5 H219 M217 506.5 H219 M217 509.5 H219 M217 513.5 H219 M217 517.5 H219 M215 521.5 H219 M217 524.5 H219 M217 528.5 H219 M217 532.5 H219 M217 536.5 H219 M211 540.5 H219 M217 543.5 H219 M217 547.5 H219 M217 551.5 H219 M217 555.5 H219 M215 558.5 H219 M217 562.5 H219 M217 566.5 H219 M217 570.5 H219 M217 574.5 H219 M211 577.5 H219 M217 581.5 H219 M217 585.5 H219 M217 589.5 H219 M217 592.5 H219 M215 596.5 H219 M217 600.5 H219 M217 604.5 H219 M217 608.5 H219 M217 611.5 H219 M211 615.5 H219 M217 619.5 H219 M217 623.5 H219 M217 626.5 H219 M217 630.5 H219 M215 634.5 H219 M217 638.5 H219 M217 642.5 H219 M217 645.5 H219 M217 649.5 H219 M211 653.5 H219 M217 657.5 H219 M217 661.5 H219 M217 664.5 H219 M217 668.5 H219 M215 672.5 H219 M217 676.5 H219 M217 679.5 H219 M217 683.5 H219 M217 687.5 H219 M211 691.5 H219 M217 695.5 H219 M217 698.5 H219 M217 702.5 H219 M217 706.5 H219 M215 710.5 H219 M217 713.5 H219 M217 717.5 H219 M217 721.5 H219 M217 725.5 H219 M211 729.5 H219 M217 732.5 H219 M217 736.5 H219 M217 740.5 H219 M217 744.5 H219 M215 747.5 H219 M217 751.5 H219 M217 755.5 H219 M217 759.5 H219 M217 763.5 H219 M211 766.5 H219 M217 770.5 H219 M217 774.5 H219 M217 778.5 H219 M217 781.5 H219 M215 785.5 H219 M217 789.5 H219 M217 793.5 H219 M217 797.5 H219 M217 800.5 H219 M211 804.5 H219 M217 808.5 H219 M217 812.5 H219 M217 815.5 H219 M217 819.5 H219 M215 823.5 H219 M217 827.5 H219 M217 831.5 H219 M217 834.5 H219 M217 838.5 H219 M211 842.5 H219 M217 846.5 H219 M217 849.5 H219" stroke="#444" stroke-width="1"/><g font-family="Liberation Sans" fill="#4a4a5a"><text transform="translate(214.8 243.8) rotate(-90)" font-size="9.5">2</text><text transform="translate(214.8 281.8) rotate(-90)" font-size="9.5">1</text><text transform="translate(214.8 357.8) rotate(-90)" font-size="9.5">1</text><text transform="translate(214.8 394.8) rotate(-90)" font-size="9.5">2</text><text transform="translate(214.8 432.8) rotate(-90)" font-size="9.5">3</text><text transform="translate(214.8 470.8) rotate(-90)" font-size="9.5">4</text><text transform="translate(214.8 508.8) rotate(-90)" font-size="9.5">5</text><text transform="translate(214.8 546.8) rotate(-90)" font-size="9.5">6</text><text transform="translate(214.8 583.8) rotate(-90)" font-size="9.5">7</text><text transform="translate(214.8 621.8) rotate(-90)" font-size="9.5">8</text><text transform="translate(214.8 659.8) rotate(-90)" font-size="9.5">9</text><text transform="translate(214.8 703.1) rotate(-90)" font-size="9.5">10</text><text transform="translate(214.8 741.1) rotate(-90)" font-size="9.5">11</text><text transform="translate(214.8 778.1) rotate(-90)" font-size="9.5">12</text><text transform="translate(214.8 816.1) rotate(-90)" font-size="9.5">13</text><text transform="translate(214.8 854.1) rotate(-90)" font-size="9.5">14</text></g><path d="M224.8 304 V312 M222 309.5 L224.8 312.5 L227.6 309.5 M221.8 313.5 H227.8" fill="none" stroke="#444" stroke-width="1.4"/><rect x="204.5" y="157.5" width="13" height="13" fill="#fff" stroke="#bdbdbd"/><path d="M210.2 160.5 V166 H215" fill="none" stroke="#222" stroke-width="1.6"/></svg>
<div class="r" style="left:203px;top:850px;width:1394px;height:21px;background:linear-gradient(#fbfbfb,#f1f1f1);"></div>
<div class="r" style="left:137px;top:871px;width:1461px;height:1px;background:#d0d0d0;"></div>
<div class="r" style="left:285px;top:852px;width:1px;height:17px;background:#bdbdbd;"></div>
<div class="r" style="left:350px;top:852px;width:1px;height:17px;background:#bdbdbd;"></div>
<div class="r" style="left:423px;top:852px;width:1px;height:17px;background:#bdbdbd;"></div>
<div class="r" style="left:550px;top:852px;width:1px;height:17px;background:#bdbdbd;"></div>
<div class="t" style="left:222.5px;top:855.69px;font-size:11px;line-height:11px;color:#3c3c3c;letter-spacing:0.047px;">Seite: 1/1</div>
<div class="t" style="left:294px;top:855.69px;font-size:11px;line-height:11px;color:#3c3c3c;letter-spacing:-0.137px;">Zeile: 1</div>
<div class="t" style="left:358px;top:855.69px;font-size:11px;line-height:11px;color:#3c3c3c;letter-spacing:-0.052px;">Spalte: 0</div>
<div class="t" style="left:431px;top:855.69px;font-size:11px;line-height:11px;color:#3c3c3c;letter-spacing:-0.140px;">Deutsch (Deutschland)</div>
<div class="t" style="left:1550px;top:855.69px;font-size:11px;line-height:11px;color:#3c3c3c;">100%</div>
<svg class="s" style="left:0;top:0" width="1600" height="900" viewBox="0 0 1600 900"><rect x="1371.5" y="857.5" width="7" height="6.5" fill="none" stroke="#333" stroke-width="1.2"/><path d="M1373.3 859.6 H1376.7 M1373.3 861.6 H1376.7" stroke="#333" stroke-width="0.9"/><path d="M1375.2 852.8 L1377.8 855.8 H1372.6 Z M1375.2 867.8 L1377.8 865 H1372.6 Z M1367 860.6 L1369.8 858 V863.2 Z M1383 860.6 L1380.2 858 V863.2 Z" fill="#333"/><rect x="1389.5" y="855.5" width="7" height="10" fill="none" stroke="#333" stroke-width="1.2"/><path d="M1391.3 857.6 H1394.7 M1391.3 859.6 H1394.7 M1391.3 861.6 H1394.7 M1391.3 863.6 H1394.7" stroke="#333" stroke-width="0.9"/><path d="M1385 860.6 L1387.8 858 V863.2 Z M1401 860.6 L1398.2 858 V863.2 Z" fill="#333"/><path d="M1407 861.3 H1415" stroke="#444" stroke-width="2"/><path d="M1426 861.5 H1517" stroke="#444" stroke-width="1"/><rect x="1469" y="857" width="3.5" height="9" fill="#444"/><path d="M1528 861.3 H1536 M1532 857.3 V865.3" stroke="#444" stroke-width="2"/></svg>
<div class="r" style="left:2px;top:871px;width:135px;height:25px;background:#f7f7f7;box-sizing:border-box;border-left:1px solid #cfcfcf;border-right:1px solid #d0d0d0;"></div>
<div class="r" style="left:2px;top:895px;width:135px;height:2px;background:#a0a0a0;"></div>
<div class="t" style="left:14px;top:878.69px;font-size:11px;line-height:11px;color:#3f3f4f;">Manage text templates</div>
<svg class="s" style="left:1584px;top:884px;" width="8" height="4" viewBox="0 0 8 4"><path d="M0 0 H7 L3.5 3.5Z" fill="#777"/></svg>
<div class="r" style="left:567px;top:362px;width:466px;height:168px;box-sizing:border-box;border:1px solid #8c8c8c;background:#fff;box-shadow:0 0 10px rgba(0,0,0,0.22);"></div><div class="r" style="left:568px;top:479px;width:464px;height:50px;background:#f0f0f0"></div><div class="t" style="left:576px;top:370.5px;font-size:12px;line-height:15px;color:#999">ingenious</div><svg class="s" style="left:0;top:0" width="1600" height="900" viewBox="0 0 1600 900"><path d="M1012 372 L1022 382 M1022 372 L1012 382" stroke="#777" stroke-width="1"/></svg><div class="t" style="left:633px;top:426.6px;font-size:12px;line-height:15px;color:#000;letter-spacing:-0.05px">Enter a short name for the new text<br>template!</div><div class="r" style="left:839px;top:430px;width:183px;height:23px;box-sizing:border-box;border:1px solid #7a7a7a;background:#fff"></div><div class="t" style="left:842px;top:434px;font-size:12px;line-height:15px;color:#000;letter-spacing:0.25px">Promotion</div><div class="r" style="left:839px;top:493px;width:86px;height:24px;box-sizing:border-box;border:2px solid #0078d7;background:#e1e1e1"></div><div class="r" style="left:936px;top:493px;width:86px;height:24px;box-sizing:border-box;border:1px solid #adadad;background:#e1e1e1"></div><div class="t" style="left:882px;top:498px;font-size:12px;line-height:15px;color:#000;transform:translateX(-50%)">OK</div><div class="t" style="left:979px;top:498px;font-size:12px;line-height:15px;color:#000;transform:translateX(-50%)">Cancel</div>
</body></html>
